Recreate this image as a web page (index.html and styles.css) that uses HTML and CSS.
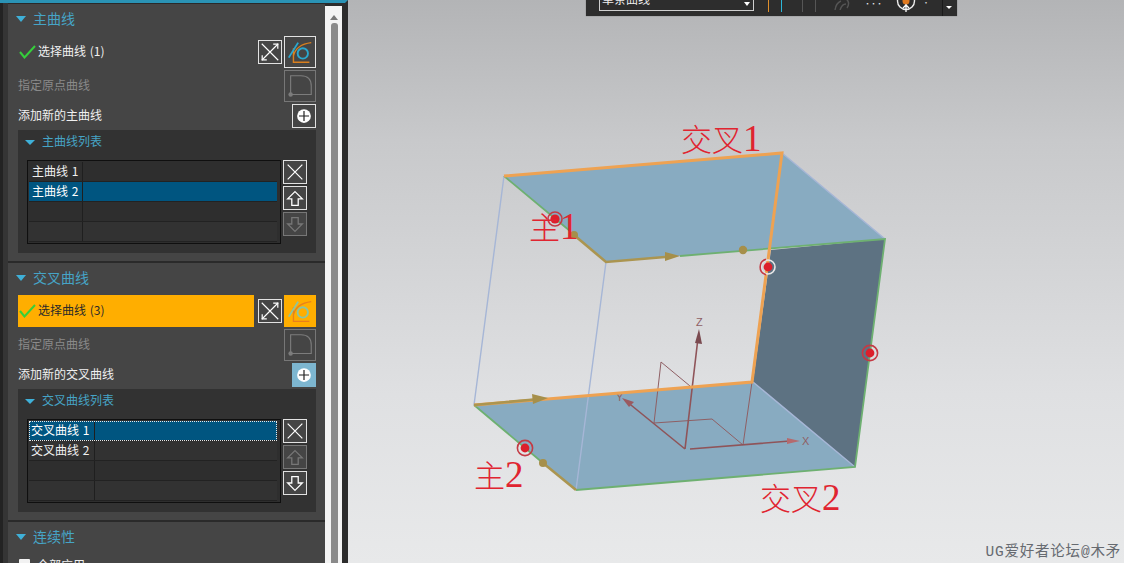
FILE: index.html
```html
<!DOCTYPE html>
<html lang="zh">
<head>
<meta charset="utf-8">
<title>通过曲线网格</title>
<link rel="stylesheet" href="styles.css">
</head>
<body>
<svg class="defs" width="0" height="0" aria-hidden="true">
  <symbol id="i-expand" viewBox="0 0 24 24">
    <path d="M3 3 21 21M21 3 3 21" fill="none" stroke="#fff" stroke-width="1.2"/>
    <path d="M15.5 3.5H20.5V8.5M8.5 20.5H3.5V15.5" fill="none" stroke="#fff" stroke-width="1.3"/>
  </symbol>
  <symbol id="i-curve" viewBox="0 0 32 32">
    <path d="M9 12V27H26M9 20Q12 8 28 6" fill="none" stroke="#d97f1e" stroke-width="1.5"/>
    <path d="M4 22 14 6" fill="none" stroke="#2aa8cf" stroke-width="2"/>
    <circle cx="19" cy="17.5" r="5.5" fill="none" stroke="#2aa8cf" stroke-width="2"/>
  </symbol>
  <symbol id="i-curve-on" viewBox="0 0 32 32">
    <path d="M9 12V27H26M9 20Q12 8 28 6" fill="none" stroke="#e8801c" stroke-width="1.4"/>
    <path d="M4 22 14 6" fill="none" stroke="#8cc4a0" stroke-width="2"/>
    <circle cx="19" cy="17.5" r="5.5" fill="none" stroke="#8cc4a0" stroke-width="2"/>
  </symbol>
  <symbol id="i-origin" viewBox="0 0 32 32">
    <path d="M6 25V5H17Q28 5 28 16V25Z" fill="none" stroke="#7c7c7c" stroke-width="1.2"/>
    <circle cx="6" cy="25" r="2.4" fill="#7c7c7c"/>
  </symbol>
  <symbol id="i-add" viewBox="0 0 24 24">
    <circle cx="12" cy="12" r="7.5" fill="#fff"/>
    <path d="M12 6.5V17.5M6.5 12H17.5" stroke="#222" stroke-width="1.3"/>
  </symbol>
  <symbol id="i-x" viewBox="0 0 24 24">
    <path d="M4 4 20 20M20 4 4 20" fill="none" stroke="#fff" stroke-width="1.3"/>
  </symbol>
  <symbol id="i-up" viewBox="0 0 24 24">
    <path d="M12 5 20 13H15.5V20H8.5V13H4Z" fill="none" stroke="currentColor" stroke-width="1.4"/>
  </symbol>
  <symbol id="i-down" viewBox="0 0 24 24">
    <path d="M12 20 20 12H15.5V5H8.5V12H4Z" fill="none" stroke="currentColor" stroke-width="1.4"/>
  </symbol>
  <symbol id="i-check" viewBox="0 0 18 14">
    <path d="M1 7 5.5 12.5 16 1" fill="none" stroke="#35cf3b" stroke-width="2"/>
  </symbol>
</svg>

<div class="app">
  <aside class="sidebar">
    <div class="edge"></div>
    <div class="groups">

      <section class="group">
        <header class="group-head"><i class="tri"></i><h2>主曲线</h2></header>
        <div class="row row-select">
          <span class="select-label"><svg class="check"><use href="#i-check"/></svg>选择曲线 (1)</span>
          <button class="btn"><svg><use href="#i-expand"/></svg></button>
          <button class="btn btn-big"><svg><use href="#i-curve"/></svg></button>
        </div>
        <div class="row row-select">
          <span class="muted">指定原点曲线</span>
          <button class="btn btn-big btn-off"><svg><use href="#i-origin"/></svg></button>
        </div>
        <div class="row row-add">
          <span>添加新的主曲线</span>
          <button class="btn"><svg><use href="#i-add"/></svg></button>
        </div>
        <div class="sub">
          <header class="sub-head"><i class="tri tri-sm"></i><h3>主曲线列表</h3></header>
          <div class="list-wrap">
            <div class="list list-a">
              <div class="item"><span>主曲线 1</span><span></span></div>
              <div class="item item-on"><span>主曲线 2</span><span></span></div>
              <div class="item"><span></span><span></span></div>
              <div class="item"><span></span><span></span></div>
            </div>
            <div class="tools">
              <button class="btn"><svg><use href="#i-x"/></svg></button>
              <button class="btn"><svg><use href="#i-up"/></svg></button>
              <button class="btn btn-off"><svg><use href="#i-down"/></svg></button>
            </div>
          </div>
        </div>
      </section>

      <section class="group">
        <header class="group-head"><i class="tri"></i><h2>交叉曲线</h2></header>
        <div class="row row-select">
          <span class="select-label select-active"><svg class="check"><use href="#i-check"/></svg>选择曲线 (3)</span>
          <button class="btn"><svg><use href="#i-expand"/></svg></button>
          <button class="btn btn-big btn-orange"><svg><use href="#i-curve-on"/></svg></button>
        </div>
        <div class="row row-select">
          <span class="muted">指定原点曲线</span>
          <button class="btn btn-big btn-off"><svg><use href="#i-origin"/></svg></button>
        </div>
        <div class="row row-add">
          <span>添加新的交叉曲线</span>
          <button class="btn btn-hover"><svg><use href="#i-add"/></svg></button>
        </div>
        <div class="sub">
          <header class="sub-head"><i class="tri tri-sm"></i><h3>交叉曲线列表</h3></header>
          <div class="list-wrap">
            <div class="list list-b">
              <div class="item item-on item-focus"><span>交叉曲线 1</span><span></span></div>
              <div class="item"><span>交叉曲线 2</span><span></span></div>
              <div class="item"><span></span><span></span></div>
              <div class="item"><span></span><span></span></div>
            </div>
            <div class="tools">
              <button class="btn"><svg><use href="#i-x"/></svg></button>
              <button class="btn btn-off"><svg><use href="#i-up"/></svg></button>
              <button class="btn"><svg><use href="#i-down"/></svg></button>
            </div>
          </div>
        </div>
      </section>

      <section class="group">
        <header class="group-head"><i class="tri"></i><h2>连续性</h2></header>
        <label class="row-check"><i class="box"></i>全部应用</label>
      </section>
    </div>
    <div class="scrollbar"><i class="scroll-up"></i><i class="scroll-thumb"></i></div>
  </aside>

  <main class="canvas">
    <svg class="scene" viewBox="348 0 776 563" preserveAspectRatio="xMinYMin meet">
      <!-- faces -->
      <polygon points="504,176 782,153 885,239 606,262" fill="#88abc1"/>
      <polygon points="474,405 753,382 855,467 576,490" fill="#88abc1"/>
      <polygon points="771,250 885,239 855,467 753,382" fill="#5d7282"/>
      <!-- wire edges -->
      <g fill="none" stroke="#a6b6d6" stroke-width="1.4">
        <path d="M504 176 474 405M606 262 576 490M782 153 885 239M753 382 855 467"/>
      </g>
      <g fill="none" stroke="#6eb071" stroke-width="1.8">
        <path d="M504 176 570 231M680 256 885 239 855 467 576 490M474 405 543 463"/>
      </g>
      <!-- coordinate system -->
      <g fill="none" stroke="#8f5f64" stroke-width="1">
        <path d="M654 423 712 419 743 445M654 423 661 362 690 386M743 445 752 382"/>
      </g>
      <g fill="none" stroke="#8f5459" stroke-width="1.6">
        <path d="M685 449 698 338M685 449 626 401M690 449 790 441"/>
      </g>
      <polygon points="699,329 702,344 695,343" fill="#7a4a50"/>
      <polygon points="800,441 787,444 787,438" fill="#b56a6e"/>
      <polygon points="622,398 634,402 629,407" fill="#9a5a60"/>
      <text class="axis" x="696" y="326">Z</text>
      <text class="axis" x="802" y="445">X</text>
      <text class="axis" x="616" y="401">Y</text>
      <!-- orange selected curves -->
      <g fill="none" stroke="#eea252" stroke-width="3">
        <path d="M504 176 782 153 752 382 474 405"/>
      </g>
      <!-- gold direction arrows -->
      <g fill="none" stroke="#ab9550" stroke-width="2.6">
        <path d="M574 235 606 262 665 257M474 405 540 399M543 463 576 490"/>
      </g>
      <g fill="#a68f4a">
        <polygon points="680,256 665,252 665,261"/>
        <polygon points="548,398 532,394 533,404"/>
        <circle cx="574" cy="235" r="4"/>
        <circle cx="743" cy="250" r="4.2"/>
        <circle cx="543" cy="463" r="4"/>
      </g>
      <!-- handles -->
      <g class="handle">
        <circle cx="555" cy="219" r="7" fill="none" stroke="#c43a44" stroke-width="1.6"/>
        <circle cx="555" cy="219" r="4.6" fill="#dc1f2b"/>
        <circle cx="768" cy="267" r="7" fill="none" stroke="#e7e7e7" stroke-width="1.6"/>
        <path d="M766 259.3A8 8 0 0 0 766 274.7" fill="none" stroke="#c43a44" stroke-width="1.6"/>
        <circle cx="768" cy="267" r="4.4" fill="#dc1f2b"/>
        <circle cx="870" cy="353" r="7.6" fill="none" stroke="#c43a44" stroke-width="1.6"/>
        <circle cx="870" cy="353" r="4.4" fill="#dc1f2b"/>
        <circle cx="525" cy="448" r="7.6" fill="none" stroke="#c43a44" stroke-width="1.6"/>
        <circle cx="525" cy="448" r="4.4" fill="#dc1f2b"/>
      </g>
      <!-- annotations -->
      <text class="note" x="681" y="151">交叉<tspan class="note-num">1</tspan></text>
      <text class="note" x="529" y="239">主<tspan class="note-num">1</tspan></text>
      <text class="note" x="474" y="487">主<tspan class="note-num">2</tspan></text>
      <text class="note" x="760" y="510">交叉<tspan class="note-num">2</tspan></text>
    </svg>

    <div class="toolbar">
      <div class="combo"><span>单条曲线</span><i class="combo-caret"></i></div>
      <i class="tick tick-orange"></i>
      <i class="tick tick-teal"></i>
      <i class="tick tick-grey"></i>
      <i class="tick tick-grey"></i>
      <svg class="tb-link" viewBox="0 0 20 10"><path d="M2 10Q3 3 8 1M12 -2Q18 2 14 8M7 10Q9 4 13 4" fill="none" stroke="#555" stroke-width="1.4"/></svg>
      <span class="tb-dots">•••</span>
      <svg class="tb-target" viewBox="0 0 20 12"><circle cx="10" cy="1" r="8.5" fill="none" stroke="#eee" stroke-width="1.4"/><circle cx="10" cy="1" r="3.5" fill="#e07a20"/><path d="M10 4V12M7 8 10 5 13 8" fill="none" stroke="#fff" stroke-width="1.3"/></svg>
      <span class="tb-dot">•</span>
      <div class="tb-more"><i class="tb-caret"></i></div>
    </div>

    <div class="watermark">UG爱好者论坛@木矛</div>
  </main>
</div>
</body>
</html>
```
FILE: styles.css
```css
* { box-sizing: border-box; }
html, body { margin: 0; height: 100%; overflow: hidden; }
body {
  font-family: "Noto Sans CJK SC", "Noto Sans", sans-serif;
  font-size: 12px;
  color: #f0f0f0;
  background: #333;
}
.defs { position: absolute; }
h2, h3 { margin: 0; font-weight: 400; }
i { display: block; }

.app { display: flex; height: 563px; }

/* left panel */
.sidebar {
  flex: 0 0 348px;
  display: grid;
  grid-template-columns: 8px 317px 17px;
  grid-template-rows: 563px;
  border-top: 3px solid #2a93b5;
  border-right: 3px solid #2c2c2c;
  background: #2c2c2c;
  overflow: hidden;
  position: relative;
}
.edge { background: #353535; border-left: 3px solid #232323; margin-top: -3px; }
.groups {
  display: flex;
  flex-direction: column;
  gap: 2px;
  padding-top: 1px;
  background: #2a2a2a;
}
.group {
  flex: none;
  height: 257px;
  padding: 0 9px 0 10px;
  background: #454545;
}
.group-head { display: flex; align-items: center; gap: 7px; height: 30px; margin: 0 0 2px -2px; }
.group-head h2 { font-size: 14px; color: #46a4c6; line-height: 24px; padding-bottom: 3px; }
.tri { width: 0; height: 0; border: solid transparent; border-width: 6px 5px 0; border-top-color: #3fb0d8; }
.tri-sm { border-width: 5px 5px 0; border-top-color: #3fb0d8; }

.row { display: flex; align-items: center; justify-content: flex-end; margin-bottom: 2px; }
.row > span:first-child { flex: 1; padding-bottom: 4px; }
.row-select { height: 32px; gap: 2px; }
.row-add { height: 24px; }
.muted { color: #8a8a8a; }
.select-label { display: flex; align-items: center; align-self: stretch; margin-right: 2px; word-spacing: 1px; }
.select-active { background: #ffae00; color: #2a2a2a; }
.check { width: 18px; height: 14px; margin: 4px 1px 0 1px; flex: none; }

.btn {
  display: flex;
  width: 24px;
  height: 24px;
  flex: none;
  padding: 0;
  color: #fff;
  background: #454545;
  border: 1px solid #e2e2e2;
}
.btn svg { width: 100%; height: 100%; display: block; }
.btn-big { width: 32px; height: 32px; }
.btn-off { border-color: #777; color: #777; }
.btn-orange { background: #ffae00; border-color: #ffae00; }
.btn-hover { background: #7db6d0; border-color: #7db6d0; }

.sub { height: 123px; padding: 0 9px; background: #323232; }
.sub-head { display: flex; align-items: center; gap: 7px; height: 24px; margin: 0 0 6px -2px; }
.sub-head h3 { font-size: 12px; color: #46a4c6; line-height: 18px; padding-bottom: 2px; }
.list-wrap { display: flex; gap: 2px; align-items: flex-start; }
.list {
  width: 254px;
  height: 84px;
  padding: 1px 3px 0 1px;
  background: #2e2e2e;
  border: 1px solid #0f0f0f;
}
.item { display: grid; height: 20px; line-height: 18px; border-bottom: 1px solid #222; }
.list-a .item { grid-template-columns: 54px 1fr; }
.list-b .item { grid-template-columns: 66px 1fr; }
.item:nth-child(even) { background: #323232; }
.item span { padding-left: 3px; border-right: 1px solid #1f1f1f; word-spacing: 1px; }
.list-b .item span { padding-left: 2px; }
.item span:last-child { border-right: 0; }
.item.item-on { background: #005580; color: #fff; }
.item-focus { outline: 1px dotted #e8e8e8; outline-offset: -1px; }
.tools { display: flex; flex-direction: column; gap: 2px; }

.row-check { display: flex; align-items: center; gap: 7px; height: 24px; margin-top: -2px; padding-left: 1px; }
.box { width: 11px; height: 11px; background: #f2f2f2; border-radius: 1px; }

.scrollbar { position: relative; background: #f3f3f3; margin: 3px 0 0; }
.scroll-up { position: absolute; left: 5px; top: 9px; width: 0; height: 0; border: solid transparent; border-width: 0 4px 5px; border-bottom-color: #777; }
.scroll-thumb { position: absolute; left: 6px; right: 4px; top: 17px; bottom: 0; background: #8a8a8a; border-radius: 3px 3px 0 0; }

/* graphics window */
.canvas {
  position: relative;
  flex: 1;
  background: linear-gradient(#b3b4b6 0%, #c8c9cb 25%, #dfe0e2 70%, #e8e9ea 100%);
  overflow: hidden;
}
.scene { display: block; width: 776px; height: 563px; }
.axis { font: 11px "Liberation Sans", sans-serif; fill: #8f5f64; }
.note {
  font-family: "Noto Sans CJK SC", sans-serif;
  font-weight: 300;
  font-size: 31px;
  fill: #e02430;
}
.note-num { font-family: "Liberation Serif", serif; font-size: 37px; }

.toolbar {
  position: absolute;
  left: 238px;
  top: 0;
  width: 371px;
  height: 16px;
  display: flex;
  align-items: flex-start;
  background: #2d2d2d;
  box-shadow: 0 0 1px #666;
}
.combo {
  position: relative;
  width: 155px;
  height: 11px;
  margin-left: 13px;
  border: 1px solid #cfcfcf;
  border-top: 0;
  overflow: hidden;
}
.combo span { position: absolute; left: 2px; top: -9px; line-height: 16px; font-size: 12px; color: #eee; }
.combo-caret { position: absolute; right: 3px; top: 2px; width: 0; height: 0; border: solid transparent; border-width: 4px 3px 0; border-top-color: #fff; }
.tick { width: 1px; height: 12px; flex: none; }
.tick-orange { margin-left: 14px; background: #e0902c; }
.tick-teal { margin-left: 12px; background: #2cb6d8; }
.tick-grey { margin-left: 20px; background: #565656; }
.tick-grey + .tick-grey { margin-left: 12px; }
.tb-link { width: 20px; height: 10px; margin-left: 17px; flex: none; }
.tb-dots { margin-left: 11px; font-size: 7px; line-height: 6px; color: #eee; letter-spacing: -1px; }
.tb-target { width: 20px; height: 12px; margin-left: 14px; flex: none; }
.tb-dot { margin-left: 6px; font-size: 8px; line-height: 5px; color: #ccc; }
.tb-more { margin-left: auto; width: 15px; height: 16px; border-left: 1px solid #1a1a1a; flex: none; }
.tb-caret { width: 0; height: 0; margin: 6px 0 0 3px; border: solid transparent; border-width: 3px 3px 0; border-top-color: #fff; }

.watermark {
  position: absolute;
  right: 3px;
  bottom: 2px;
  font: 14.5px/18px "Liberation Mono", "Noto Sans CJK SC", monospace;
  letter-spacing: 0.8px;
  color: #666a70;
}
```
